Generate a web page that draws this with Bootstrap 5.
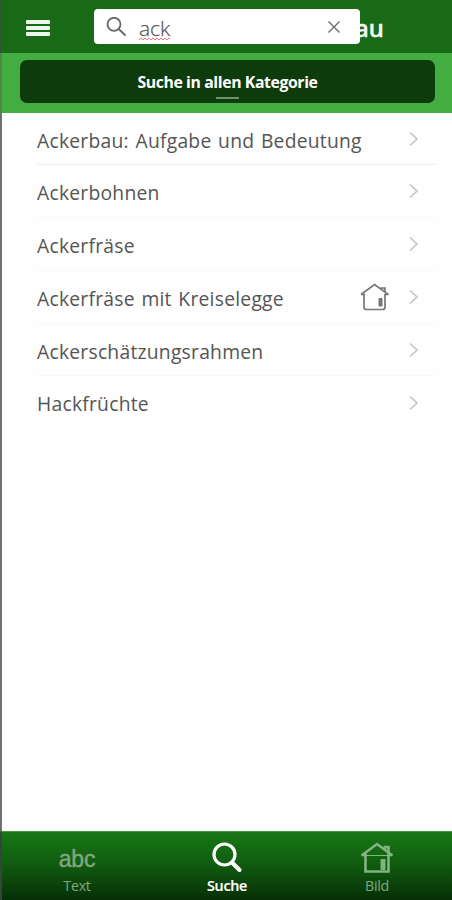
<!DOCTYPE html>
<html lang="de">
<head>
<meta charset="utf-8">
<meta name="viewport" content="width=device-width, initial-scale=1">
<title>Suche</title>
<link href="https://cdn.jsdelivr.net/npm/bootstrap@5.3.0/dist/css/bootstrap.min.css" rel="stylesheet">
<style>
body{font-family:"Open Sans","Noto Sans",sans-serif;height:900px;overflow:hidden;background:#fefefe}
.app{height:900px;border-left:2px solid #707070}
.topbar{height:53px;background:#186a16;margin-left:-2px;border-left:2px solid #35523a;padding:9px 0 0 24px}
.menu-btn{width:24px;height:16px;margin-top:11px}
.menu-btn span{height:4px;border-radius:1px;background:#eef5ee}
.searchbox{width:266px;height:35px;border-radius:4px;background:#fff;margin-left:44px;padding:0 19px 0 12px;position:relative;z-index:1}
.query{font-size:21px;line-height:26px;letter-spacing:-.05px;color:#555;margin:6px 0 0 12px;font-weight:300;-webkit-text-stroke:.25px #555;position:relative}
.query svg{position:absolute;left:0;top:22px}
.clear-icon{margin-top:11px}
.app-title{font-family:"Noto Sans",sans-serif;font-size:24px;font-weight:500;-webkit-text-stroke:.5px #f4f8f4;line-height:30px;color:#f4f8f4;margin:4px 0 0 -5px}
.filterbar{height:60px;background:#44ad42;padding:7px 17px 0 18px;margin-left:-2px;border-left:2px solid #498a4b}
.filter-btn{height:43px;border-radius:7px;background:#0e3b0c;color:#fff;font-size:15.8px;font-weight:700;letter-spacing:-.4px;line-height:22px}
.grip{width:23px;height:2px;background:#6b936a;margin-top:4px}
.results{padding:0 16px 0 35px}
.result{height:53px;padding-right:17px;border-bottom:1px solid #f8f8f8;color:#555;font-size:19.3px;line-height:28px;letter-spacing:.24px;word-spacing:1.4px}
.result:first-child{height:52px;border-color:#eee}
.result:nth-child(5){height:52px}
.result:nth-child(5) span{padding-top:5px}
.result span{padding-top:4px;white-space:nowrap}
.result:last-child span{padding-top:3px}
.house-icon{margin-right:19px}
.tabs{height:69px;background:linear-gradient(#187815,#115d10 45%,#062f06);border-top:1px solid #479a45;margin-left:-2px;border-left:2px solid #33463a}
.tab{width:150px;color:#80a77f;font-size:14.3px;line-height:20px;letter-spacing:-.3px}
.tab-icon{height:35px;margin-top:9px}
.abc{font-family:"Liberation Sans",sans-serif;font-size:23px;letter-spacing:-.2px;-webkit-text-stroke:.4px #80a77f}
.tab.current{color:#fff;font-weight:600;-webkit-text-stroke:.2px #fff}
</style>
<script src="https://cdn.jsdelivr.net/npm/bootstrap@5.3.0/dist/js/bootstrap.bundle.min.js"></script>
</head>
<body>
<div class="app d-flex flex-column">
<header class="topbar d-flex align-items-start flex-shrink-0">
<div class="menu-btn d-flex flex-column justify-content-between"><span></span><span></span><span></span></div>
<div class="searchbox d-flex align-items-start">
<svg class="mt-2" width="21" height="21" viewBox="0 0 21 21" fill="none" stroke="#666" stroke-width="1.8"><circle cx="8" cy="7.3" r="6.5"/><path d="M12.7 12 19.5 18.5"/></svg>
<div class="query">ack<svg width="33" height="4" viewBox="0 0 33 4" fill="none" stroke="#ee7880" stroke-width="1"><path d="m0 3 2-2 2 2 2-2 2 2 2-2 2 2 2-2 2 2 2-2 2 2 2-2 2 2 2-2 2 2 2-2 1 1"/></svg></div>
<svg class="clear-icon ms-auto" width="14" height="14" viewBox="0 0 14 14" fill="none" stroke="#6c6c6c" stroke-width="1.4"><path d="m1.5 1.5 11 11m0-11-11 11"/></svg>
</div>
<h1 class="app-title">au</h1>
</header>
<div class="filterbar flex-shrink-0">
<div class="filter-btn d-flex flex-column align-items-center justify-content-end">
<div>Suche in allen Kategorie</div><div class="grip mb-1"></div></div>
</div>
<main class="results flex-grow-1">
<div class="result d-flex align-items-center"><span class="me-auto">Ackerbau: Aufgabe und Bedeutung</span><svg width="10" height="16" viewBox="0 0 10 16" fill="none" stroke="#c6c6c6" stroke-width="1.7"><path d="m1 1.5 7 6.5-7 6.5"/></svg></div>
<div class="result d-flex align-items-center"><span class="me-auto">Ackerbohnen</span><svg width="10" height="16" viewBox="0 0 10 16" fill="none" stroke="#c6c6c6" stroke-width="1.7"><path d="m1 1.5 7 6.5-7 6.5"/></svg></div>
<div class="result d-flex align-items-center"><span class="me-auto">Ackerfräse</span><svg width="10" height="16" viewBox="0 0 10 16" fill="none" stroke="#c6c6c6" stroke-width="1.7"><path d="m1 1.5 7 6.5-7 6.5"/></svg></div>
<div class="result d-flex align-items-center"><span class="me-auto">Ackerfräse mit Kreiselegge</span>
<svg class="house-icon" width="30" height="28" viewBox="0 0 30 28" fill="none" stroke="#777" stroke-width="1.7"><path d="M1 11.500 14.500 1.500 28.500 11.500M4 11V24q0 2.500 2.500 2.500h16q2.500 0 2.500-2.500V11M21.500 6.500V5H25V9M1 11.500H5M24 11.500h4.500"/><path d="M19 15.500h3v7.500h-3z" fill="#777" stroke-width="1"/></svg>
<svg width="10" height="16" viewBox="0 0 10 16" fill="none" stroke="#c6c6c6" stroke-width="1.7"><path d="m1 1.5 7 6.5-7 6.5"/></svg></div>
<div class="result d-flex align-items-center"><span class="me-auto">Ackerschätzungsrahmen</span><svg width="10" height="16" viewBox="0 0 10 16" fill="none" stroke="#c6c6c6" stroke-width="1.7"><path d="m1 1.5 7 6.5-7 6.5"/></svg></div>
<div class="result d-flex align-items-center border-0"><span class="me-auto">Hackfrüchte</span><svg width="10" height="16" viewBox="0 0 10 16" fill="none" stroke="#c6c6c6" stroke-width="1.7"><path d="m1 1.5 7 6.5-7 6.5"/></svg></div>
</main>
<nav class="tabs d-flex flex-shrink-0">
<div class="tab d-flex flex-column align-items-center"><div class="tab-icon abc d-flex align-items-center">abc</div><div>Text</div></div>
<div class="tab current d-flex flex-column align-items-center"><div class="tab-icon"><svg width="30" height="32" viewBox="0 0 30 32" fill="none" stroke="#fff" stroke-width="3.2"><circle cx="12.500" cy="13.500" r="10.500"/><path d="m20 21.500 7.500 7.500" stroke-width="4" stroke-linecap="round"/></svg></div><div>Suche</div></div>
<div class="tab d-flex flex-column align-items-center"><div class="tab-icon"><svg width="34" height="33" viewBox="0 0 34 33" fill="none" stroke="#80b580" stroke-width="2.600"><path d="M1.500 14.500 17 3 32.500 14.500M5.500 13.500v17h23v-17M25 8.500V6h3.500v5.500M1.500 14H7M27 14h5.500"/><path d="M7 14.500h20" stroke-width="1"/><path d="M21 18.500h4v10h-4z" fill="#80b580" stroke-width="1"/></svg></div><div>Bild</div></div>
</nav>
</div>
</body>
</html>
